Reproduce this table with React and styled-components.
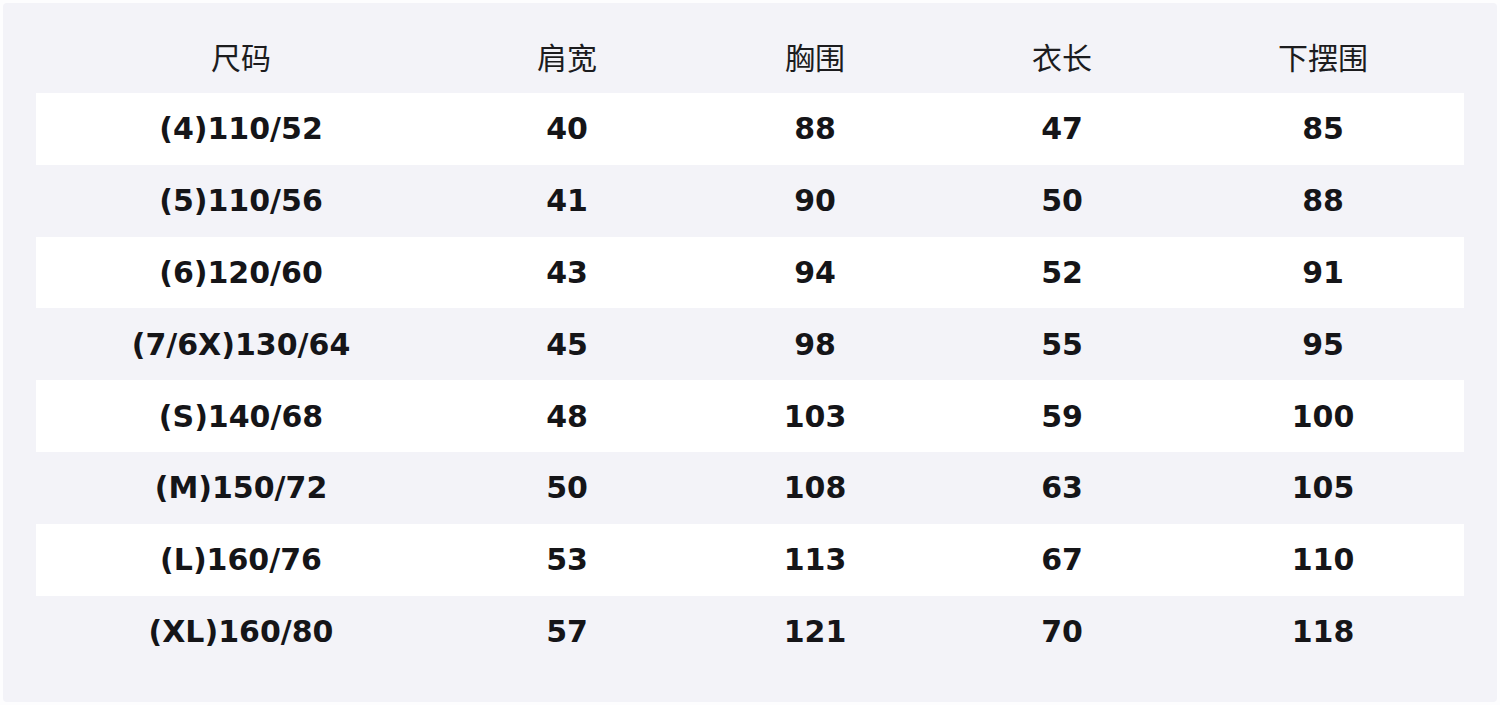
import React from 'react';
import styled, { createGlobalStyle } from 'styled-components';

const GlobalStyle = createGlobalStyle`
    html, body {
        margin: 0;
        padding: 0;
        background: #fdfdfe;
    }
`;

const sizes = [
    ['(4)110/52', 40, 88, 47, 85],
    ['(5)110/56', 41, 90, 50, 88],
    ['(6)120/60', 43, 94, 52, 91],
    ['(7/6X)130/64', 45, 98, 55, 95],
    ['(S)140/68', 48, 103, 59, 100],
    ['(M)150/72', 50, 108, 63, 105],
    ['(L)160/76', 53, 113, 67, 110],
    ['(XL)160/80', 57, 121, 70, 118],
];

const headers = ['尺码', '肩宽', '胸围', '衣长', '下摆围'];

function App() {
    return (
        <>
            <GlobalStyle />
            <Page>
                <Table>
                    <HeadRow>
                        {headers.map(h => <HeadCell key={h}>{h}</HeadCell>)}
                    </HeadRow>
                    {sizes.map((row, i) => (
                        <Row key={row[0]} $odd={i % 2 === 0}>
                            {row.map((v, j) => <Cell key={j}>{v}</Cell>)}
                        </Row>
                    ))}
                </Table>
            </Page>
        </>
    );
}

export default App;

const Page = styled.div`
    margin: 3px;
    height: 699px;
    box-sizing: border-box;
    background: #f3f3f8;
    border-radius: 4px;
    padding: 17px 33px 0 33px;
`;

const Table = styled.div`
    display: flex;
    flex-direction: column;
`;

const cols = '410px 242px 254px 240px 282px';

const HeadRow = styled.div`
    display: grid;
    grid-template-columns: ${cols};
    height: 73px;
    align-items: center;
`;

const HeadCell = styled.div`
    text-align: center;
    font-family: "Noto Sans CJK SC", "Noto Sans", sans-serif;
    font-size: 30px;
    color: #1c1c1e;
    padding-bottom: 2px;
`;

const Row = styled.div`
    display: grid;
    grid-template-columns: ${cols};
    height: 71.8px;
    align-items: center;
    background: ${p => (p.$odd ? '#ffffff' : 'transparent')};
`;

const Cell = styled.div`
    text-align: center;
    font-family: "DejaVu Sans", "Noto Sans", sans-serif;
    font-weight: bold;
    font-size: 30px;
    color: #151518;
`;
